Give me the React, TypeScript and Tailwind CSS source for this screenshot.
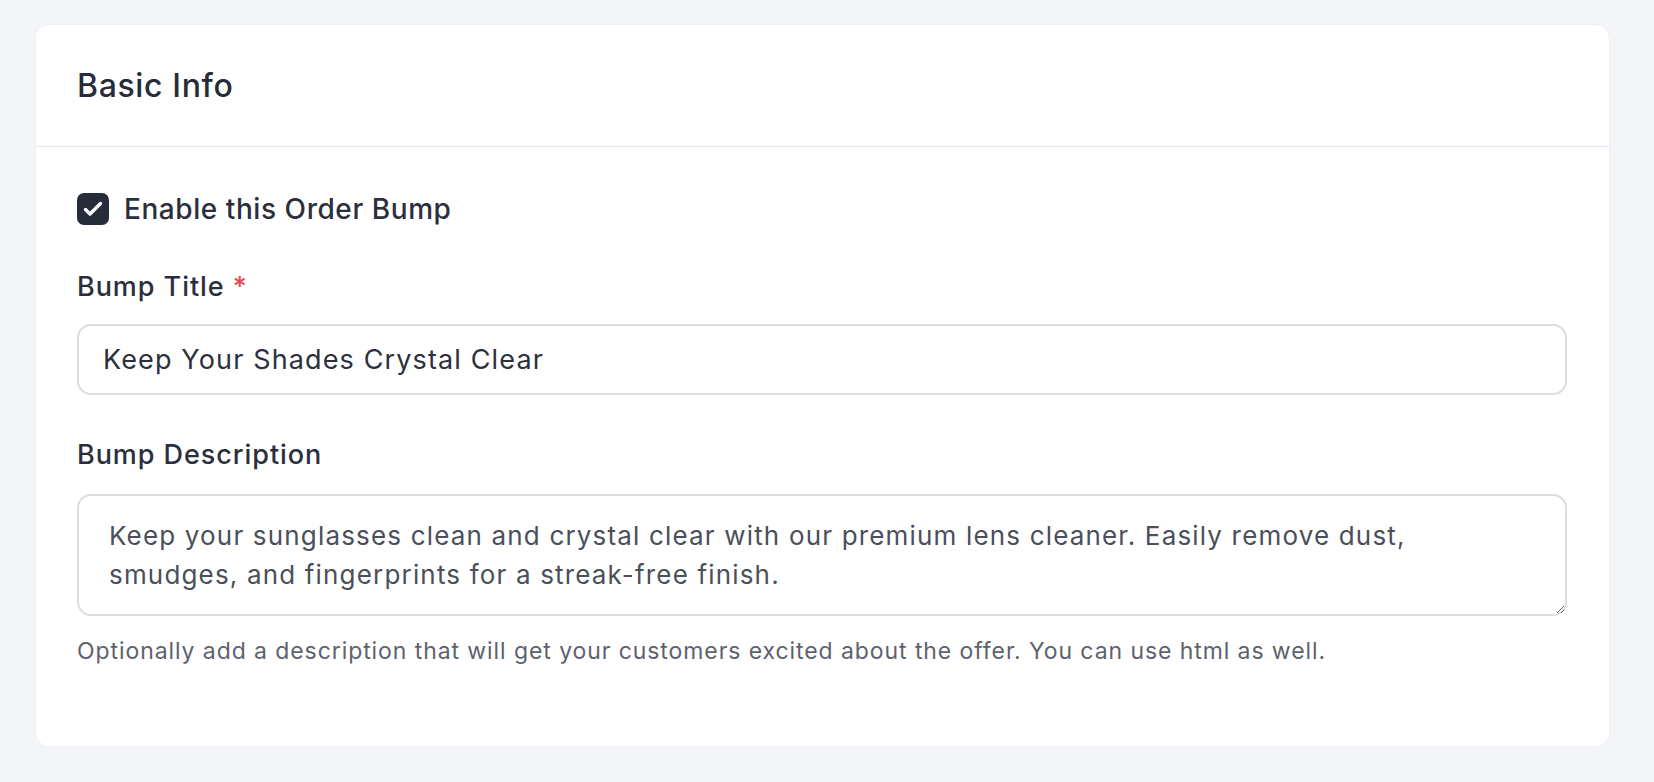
import { useState } from 'react';

const DESCRIPTION =
  'Keep your sunglasses clean and crystal clear with our premium lens cleaner. Easily remove dust, smudges, and fingerprints for a streak-free finish.';

function CheckBox({ checked, onToggle }: { checked: boolean; onToggle: () => void }) {
  return (
    <button
      type="button"
      onClick={onToggle}
      className={`flex h-[32px] w-[32px] shrink-0 items-center justify-center rounded-[7px] ${
        checked ? 'bg-[#272c3b]' : 'border-2 border-[#c9ccd3] bg-white'
      }`}
    >
      {checked && (
        <svg viewBox="0 0 32 32" className="h-[32px] w-[32px]" fill="none">
          <path
            d="M8.5 16.5l4.5 4.5L23.5 10.5"
            stroke="white"
            strokeWidth={3.4}
            strokeLinecap="round"
            strokeLinejoin="round"
          />
        </svg>
      )}
    </button>
  );
}

export default function App() {
  const [enabled, setEnabled] = useState(true);
  const [title, setTitle] = useState('Keep Your Shades Crystal Clear');
  const [description, setDescription] = useState(DESCRIPTION);

  return (
    <div
      className="min-h-screen bg-[#f4f5f9] pt-[24px] pr-[44px] pb-[37px] pl-[35px]"
      style={{ fontFamily: 'Inter, "Noto Sans", sans-serif' }}
    >
      <div className="flex h-[723px] flex-col rounded-[14px] border border-[#eef0f4] bg-white">
        <div className="flex h-[122px] items-center border-b border-[#e6e7ea] px-[41px]">
          <h2 className="text-[32px] leading-[40px] font-medium tracking-[0.02em] text-[#272b3a]">
            Basic Info
          </h2>
        </div>

        <div className="flex flex-col pt-[44px] pr-[42px] pl-[41px]">
          <label className="flex items-center gap-[15px]">
            <CheckBox checked={enabled} onToggle={() => setEnabled(!enabled)} />
            <span className="text-[28px] leading-[36px] font-medium tracking-[0.02em] text-[#2b2f3d]">
              Enable this Order Bump
            </span>
          </label>

          <label className="mt-[42px] text-[27px] leading-[36px] font-medium tracking-[0.035em] text-[#2b2f3d]">
            Bump Title <span className="text-[#e5484d]">*</span>
          </label>
          <input
            value={title}
            onChange={(e) => setTitle(e.target.value)}
            className="mt-[19px] h-[71px] w-full rounded-[14px] border-2 border-[#dcdde1] bg-white px-[24px] text-[27px] tracking-[0.042em] text-[#2c303d] outline-none"
          />

          <label className="mt-[42px] text-[27px] leading-[36px] font-medium tracking-[0.035em] text-[#2b2f3d]">
            Bump Description
          </label>
          <textarea
            value={description}
            onChange={(e) => setDescription(e.target.value)}
            className="mt-[21px] h-[122px] w-full rounded-[14px] border-2 border-[#dcdde1] bg-white pt-[20px] pr-[90px] pl-[30px] text-[26px] leading-[39px] tracking-[0.045em] text-[#4a4f5b] outline-none"
          />
          <p className="mt-[20px] text-[23px] leading-[30px] tracking-[0.04em] text-[#5d626d]">
            Optionally add a description that will get your customers excited about the offer. You can use html as well.
          </p>
        </div>
      </div>
    </div>
  );
}
